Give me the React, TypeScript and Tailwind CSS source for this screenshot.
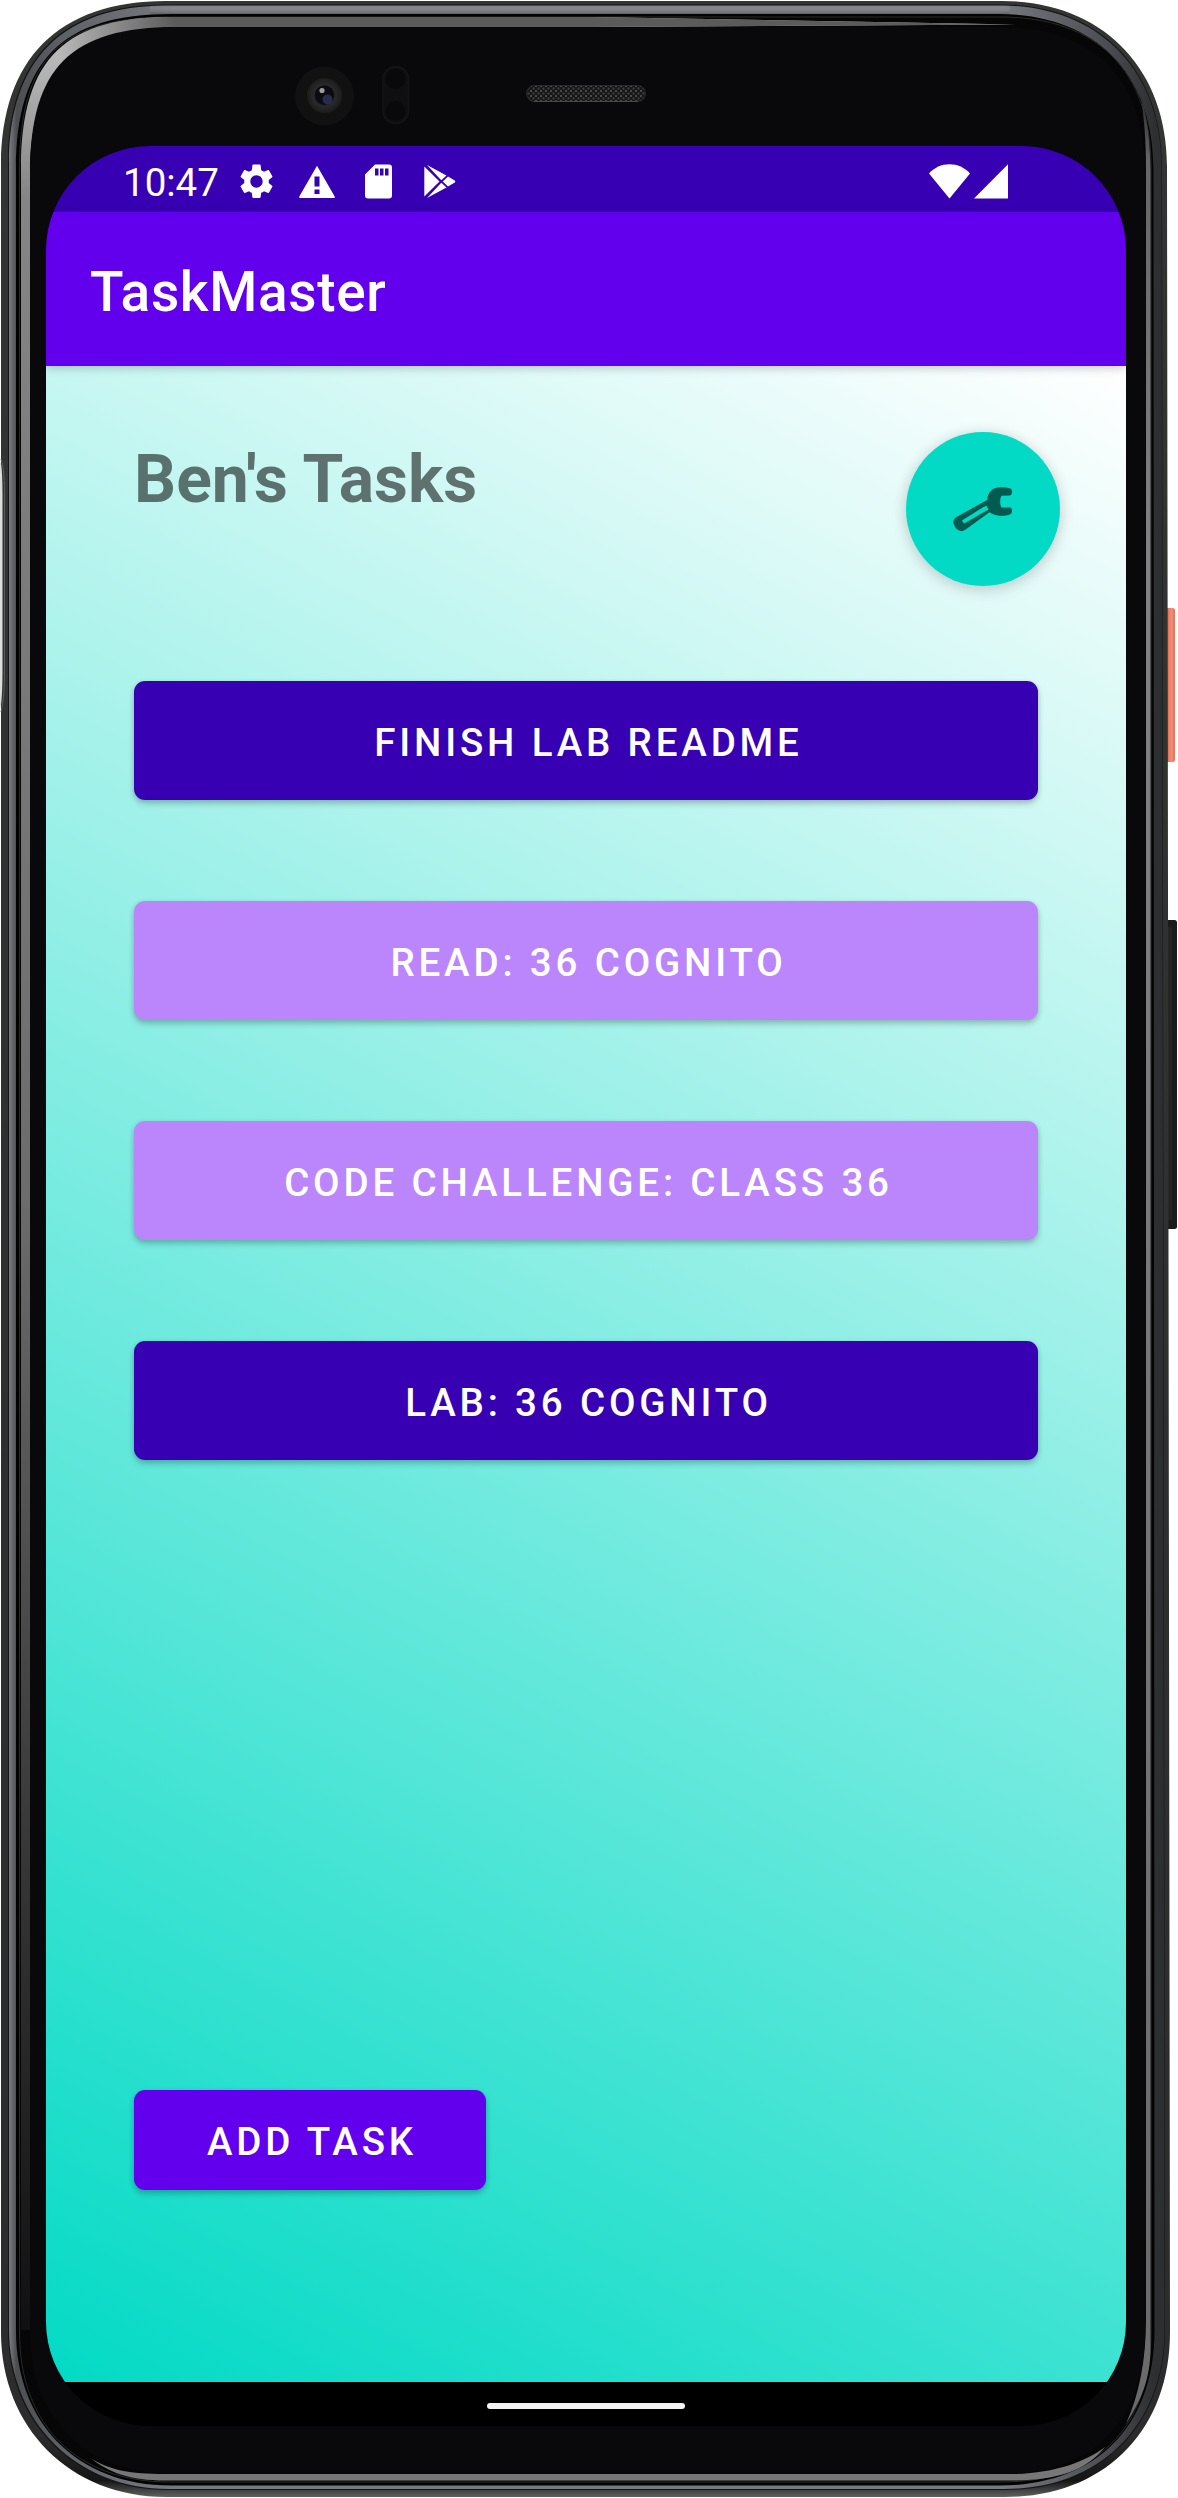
import React from "react";

type Corner = { r: number; k: number };

/** Closed path of a rectangle with soft, squircle-like corners (tl, tr, br, bl). */
function softRect(x0: number, y0: number, x1: number, y1: number, c: Corner[], slant = 0): string {
  const [tl, tr, br, bl] = c;
  const xb = x1 + slant;
  const q = (p: Corner) => p.r * (1 - p.k);
  return [
    `M${x0 + tl.r} ${y0}`,
    `H${x1 - tr.r}`,
    `C${x1 - q(tr)} ${y0} ${x1} ${y0 + q(tr)} ${x1} ${y0 + tr.r}`,
    `L${xb} ${y1 - br.r}`,
    `C${xb} ${y1 - q(br)} ${xb - q(br)} ${y1} ${xb - br.r} ${y1}`,
    `H${x0 + bl.r}`,
    `C${x0 + q(bl)} ${y1} ${x0} ${y1 - q(bl)} ${x0} ${y1 - bl.r}`,
    `V${y0 + tl.r}`,
    `C${x0} ${y0 + q(tl)} ${x0 + q(tl)} ${y0} ${x0 + tl.r} ${y0}Z`,
  ].join("");
}

const corners = (tl: number, tlk: number, r: number, k: number): Corner[] => [
  { r: tl, k: tlk },
  { r, k },
  { r, k },
  { r, k: k - 0.02 },
];

const GLINT = "M21 2330V169C21 55 68 17 172 17H590L1015 24.5L590 27H176C85 27 30 66 30 173V2330Z";

function DeviceBody() {
  return (
    <svg className="absolute inset-0" width="1178" height="2498" viewBox="0 0 1178 2498" fill="none">
      <defs>
        <linearGradient id="power" x1="1167" x2="1175" y1="0" y2="0" gradientUnits="userSpaceOnUse">
          <stop offset="0" stopColor="#c95f49" />
          <stop offset=".25" stopColor="#ec8069" />
          <stop offset=".65" stopColor="#f28d76" />
          <stop offset=".85" stopColor="#e8705a" />
          <stop offset="1" stopColor="#ea7b66" />
        </linearGradient>
        <linearGradient id="shell" x1="0" x2="0" y1="0" y2="2498" gradientUnits="userSpaceOnUse">
          <stop offset="0" stopColor="#333533" />
          <stop offset=".975" stopColor="#2b2c2b" />
          <stop offset=".993" stopColor="#151515" />
          <stop offset="1" stopColor="#666" />
        </linearGradient>
        <linearGradient id="metal" x1="0" x2="1178" y1="0" y2="0" gradientUnits="userSpaceOnUse">
          <stop offset=".006" stopColor="#85888e" />
          <stop offset=".014" stopColor="#4c4e52" />
          <stop offset=".06" stopColor="#606368" />
          <stop offset=".15" stopColor="#777980" />
          <stop offset=".85" stopColor="#777980" />
          <stop offset=".94" stopColor="#4b4d52" />
          <stop offset=".98" stopColor="#2e2f31" />
          <stop offset="1" stopColor="#2b2c2e" />
        </linearGradient>
        <linearGradient id="metalFade" x1="0" x2="0" y1="4" y2="15" gradientUnits="userSpaceOnUse">
          <stop offset="0" stopColor="#000" stopOpacity=".35" />
          <stop offset=".35" stopColor="#fff" stopOpacity=".1" />
          <stop offset="1" stopColor="#000" stopOpacity=".3" />
        </linearGradient>
        <linearGradient id="glintTop" x1="60" x2="175" y1="0" y2="0" gradientUnits="userSpaceOnUse">
          <stop offset="0" stopColor="#5b5b5b" stopOpacity="0" />
          <stop offset="1" stopColor="#5b5b5b" />
        </linearGradient>
        <linearGradient id="glintLeft" x1="0" x2="0" y1="60" y2="2330" gradientUnits="userSpaceOnUse">
          <stop offset="0" stopColor="#b8b8b8" />
          <stop offset=".06" stopColor="#858585" />
          <stop offset=".5" stopColor="#6c6c6c" />
          <stop offset=".85" stopColor="#2c2c2c" />
          <stop offset="1" stopColor="#101012" />
        </linearGradient>
        <linearGradient id="glintRight" x1="0" x2="0" y1="90" y2="2430" gradientUnits="userSpaceOnUse">
          <stop offset="0" stopColor="#222" />
          <stop offset=".03" stopColor="#666" />
          <stop offset=".2" stopColor="#828282" />
          <stop offset="1" stopColor="#6a6a6a" />
        </linearGradient>
        <radialGradient id="lens">
          <stop offset="0" stopColor="#0b0b12" />
          <stop offset=".5" stopColor="#101014" />
          <stop offset=".6" stopColor="#2a2a2a" />
          <stop offset="1" stopColor="#1c1c1c" />
        </radialGradient>
        <pattern id="mesh" width="5" height="5" patternUnits="userSpaceOnUse">
          <rect width="5" height="5" fill="#161616" />
          <rect x="0" y="0" width="2" height="2" fill="#4a4a4a" />
          <rect x="2.5" y="2.5" width="2" height="2" fill="#424242" />
        </pattern>
      </defs>

      {/* side keys */}
      <rect x="1164" y="608" width="11" height="154" rx="2.5" fill="url(#power)" />
      <rect x="1165" y="920" width="12" height="309" rx="2.5" fill="#1b1b1b" />
      <rect x="1168" y="927" width="4" height="293" fill="#242424" />

      {/* shell and metal band */}
      <path d={softRect(1, 1, 1167, 2497, corners(165, 0.65, 165, 0.6), 3)} fill="url(#shell)" />
      <path d={softRect(8, 4.5, 1162, 2490, corners(158, 0.66, 160, 0.6), 3)} fill="#151515" />
      <path d={softRect(9, 5.5, 1161.5, 2489, corners(158, 0.66, 160, 0.6), 3)} fill="url(#metal)" />
      <path d="M150 5.5H1010V14H150Z" fill="url(#metalFade)" />
      <path d={softRect(16, 14, 1153.5, 2485.5, corners(155, 0.7, 155, 0.62), 1)} fill="#030303" />
      <path
        d={softRect(19.5, 17, 1151, 2482, corners(152, 0.73, 150, 0.64))}
        stroke="#2a2a2b"
        strokeWidth="1"
        fill="#060607"
      />
      <path d={GLINT} fill="url(#glintLeft)" />
      <path d={GLINT} fill="url(#glintTop)" />
      <path d="M1150.500 2350V170C1150 140 1147 115 1140 92C1144 115 1146 140 1146 170V2320C1146 2360 1139 2395 1126 2424C1141 2400 1150 2380 1150.500 2350Z" fill="url(#glintRight)" />
      <path
        d="M92 2459C110 2470 130 2474 165 2474H1015C1055 2473 1085 2462 1105 2447C1085 2472 1055 2480.500 1010 2480.500H165C130 2480.500 108 2472 92 2459Z"
        fill="#777"
      />
      <path d={softRect(30, 27, 1145, 2474, corners(146, 0.72, 144, 0.64))} fill="#09090b" />

      {/* antenna notch on the left edge */}
      <path d="M0 461C2 463 2.500 480 2.500 500V670C2.500 690 1.500 705 0 710Z" fill="#dcdedd" />
      <path d="M1 459C4 468 4.500 480 4.500 500V670C4.500 692 3 704 1 712" stroke="#5a5f5d" strokeWidth="1" />

      {/* front camera, proximity sensor, earpiece */}
      <circle cx="324.500" cy="96" r="29.500" fill="#111111" />
      <circle cx="324.500" cy="95.500" r="17.500" fill="url(#lens)" />
      <circle cx="324.500" cy="95" r="9.500" fill="#0b0b11" />
      <circle cx="327.500" cy="99.500" r="5" fill="#2e3a66" opacity=".75" />
      <circle cx="322" cy="90.500" r="2.600" fill="#9a9a9f" />
      <rect x="383" y="66.500" width="25.500" height="57" rx="12.700" fill="#0f0f11" stroke="#151517" strokeWidth="1.500" />
      <circle cx="395.500" cy="79" r="10" fill="#09090b" />
      <circle cx="395.500" cy="111" r="10" fill="#09090b" />
      <rect x="526.500" y="85.500" width="119" height="16" rx="8" fill="url(#mesh)" stroke="#2b2b2b" />
      <path d="M534 101.500H638" stroke="#484848" />
    </svg>
  );
}

function StatusBar() {
  return (
    <div className="flex h-[66px] items-center bg-[#3700b3] text-white">
      <span className="ml-[77px] w-[113px] pt-[8px] text-[38.5px] leading-none">10:47</span>
      <svg className="mt-[5px] h-[41px] w-[41px]" viewBox="0 0 24 24" fill="currentColor">
        <path d="M19.140 12.940c.040-.300.060-.610.060-.940 0-.320-.020-.640-.070-.940l2.030-1.580c.180-.140.230-.410.120-.610l-1.920-3.320c-.120-.220-.370-.290-.590-.220l-2.390.960c-.500-.380-1.030-.700-1.620-.940L14.400 2.400c-.040-.240-.240-.410-.480-.410h-3.840c-.240 0-.430.170-.470.410L9.250 5.350c-.590.240-1.130.570-1.620.940L5.240 5.330c-.220-.080-.470 0-.590.220L2.740 8.870c-.120.210-.080.470.120.610l2.030 1.580c-.050.300-.090.630-.090.940s.020.640.070.940l-2.030 1.580c-.180.140-.230.410-.120.610l1.920 3.320c.120.220.370.290.590.220l2.390-.960c.500.380 1.030.700 1.620.940l.360 2.540c.050.240.240.410.480.410h3.840c.240 0 .440-.170.470-.410l.360-2.540c.590-.240 1.130-.560 1.620-.940l2.390.960c.220.080.470 0 .590-.220l1.920-3.320c.120-.220.070-.470-.120-.610l-2.010-1.580zM12 15.600c-1.980 0-3.600-1.620-3.600-3.600s1.620-3.600 3.600-3.600 3.600 1.620 3.600 3.600-1.620 3.600-3.600 3.600z" />
      </svg>
      <svg className="mt-[5px] ml-[22px] h-[34px] w-[36px]" viewBox="0 0 36 34" fill="currentColor">
        <path fillRule="evenodd" d="M18 .8L.3 31.600Q-.3 33 1 33H35Q36.300 33 35.700 31.600ZM15.500 11.500H20.500V21.500H15.500ZM15.500 24.500H20.500V29H15.500Z" />
      </svg>
      <svg className="mt-[5px] ml-[30px] h-[35px] w-[27px]" viewBox="0 0 27 35" fill="currentColor">
        <path fillRule="evenodd" d="M10 .5H24Q27 .5 27 3.500V31.500Q27 34.500 24 34.500H3Q0 34.500 0 31.500V10.500ZM10 4.500V11.500H13.500V4.500ZM15 4.500V11.500H18.500V4.500ZM20 4.500V11.500H23.500V4.500Z" />
      </svg>
      <svg className="mt-[5px] ml-[32px] h-[35px] w-[32px]" viewBox="0 0 32 35" fill="currentColor">
        <path d="M.3 2.500L15.500 17.500L.3 32.500Z" />
        <path d="M3 1L22.500 11.500L17.300 16.200Z" />
        <path d="M3 34L22.500 23.500L17.300 18.800Z" />
        <path d="M24 12.500L30.800 16.500Q31.800 17.500 30.800 18.500L24 22.500L18.700 17.500Z" />
      </svg>
      <svg className="mt-[5px] ml-[473px] h-[35px] w-[41px]" viewBox="0 0 41 35" fill="currentColor">
        <path d="M20.500 34.500L0 9.500C5.500 3.500 12.500.3 20.500.3S35.500 3.500 41 9.500Z" />
      </svg>
      <svg className="mt-[5px] ml-[4px] h-[35px] w-[34px]" viewBox="0 0 34 35" fill="currentColor">
        <path d="M34 .3V34.500H0Z" />
      </svg>
    </div>
  );
}

function WrenchIcon() {
  return (
    <svg className="h-[46px] w-[62px]" viewBox="0 0 62 46">
      <path
        fill="#035a51"
        fillRule="evenodd"
        d="M58.500 2.500C61 3.700 60.500 8.500 58 9.500L49.500 9.800C47.800 13 47.600 18.500 49.500 21.500H58.500C60.500 22.500 60.700 27 58.500 28.200C54.500 29.500 50 30.500 45.500 29.500C42.500 29.200 39.500 27.600 37.500 26.300L13 44C9.500 46.500 5.500 44.500 3.500 41.500C.8 38 .3 34 4 31.300L35.500 13.700C35.200 8 39 3 44.500 1.700C49 .8 54.500 1.200 58.500 2.500ZM10 34.500L12 37.500L36.500 23.500L34.500 19.800L31.500 21Z"
      />
    </svg>
  );
}

const tasks = [
  { title: "FINISH LAB README", done: false },
  { title: "READ: 36 COGNITO", done: true },
  { title: "CODE CHALLENGE: CLASS 36", done: true },
  { title: "LAB: 36 COGNITO", done: false },
];

const buttonBase =
  "flex items-center justify-center rounded-[11px] text-[38.5px] font-medium leading-none tracking-[3.84px] text-white shadow-[0_4px_6px_rgba(0,0,0,0.18),0_1px_5px_rgba(0,0,0,0.12)]";

export default function App() {
  return (
    <div className="relative h-[2498px] w-[1178px] overflow-hidden bg-white font-['Roboto',sans-serif]">
      <DeviceBody />
      <div className="relative pt-[146px] pl-[46px]">
        <div className="flex h-[2280px] w-[1080px] flex-col overflow-hidden rounded-[104px] bg-black">
          <StatusBar />
          <header className="relative flex h-[154px] items-center bg-[#6200ee] pt-[6px] pl-[44px] shadow-[0_2px_9px_rgba(0,0,0,0.22)]">
            <h1 className="text-[55px] leading-none font-medium tracking-[0.65px] text-white">TaskMaster</h1>
          </header>
          <main className="flex h-[2016px] flex-col items-start bg-[linear-gradient(28.2deg,#03dac5,#ffffff)] pl-[88px]">
            <div className="flex h-[315px] w-[926px] items-start justify-between pt-[66px]">
              <h2 className="mt-[4px] text-[66px] leading-[88px] font-bold tracking-[0.05px] text-black/54">Ben's Tasks</h2>
              <button className="flex h-[154px] w-[154px] items-center justify-center rounded-full bg-[#03dac5] shadow-[0_5px_16px_rgba(0,0,0,0.12),0_0_14px_rgba(0,0,0,0.09)]">
                <WrenchIcon />
              </button>
            </div>
            <div className="flex w-[904px] flex-col gap-[101px]">
              {tasks.map((t) => (
                <button
                  key={t.title}
                  className={`${buttonBase} h-[119px] w-full pt-[6px] pl-[5px] ${t.done ? "bg-[#bb86fc]" : "bg-[#3700b3]"}`}
                >
                  {t.title}
                </button>
              ))}
            </div>
            <button className={`${buttonBase} mt-[630px] h-[100px] w-[352px] bg-[#6200ee] pt-[4px] pl-[4px]`}>
              ADD TASK
            </button>
          </main>
          <div className="flex flex-1 items-center justify-center">
            <div className="mt-[4px] h-[6px] w-[198px] rounded-full bg-[#f5f5f5]" />
          </div>
        </div>
      </div>
    </div>
  );
}
